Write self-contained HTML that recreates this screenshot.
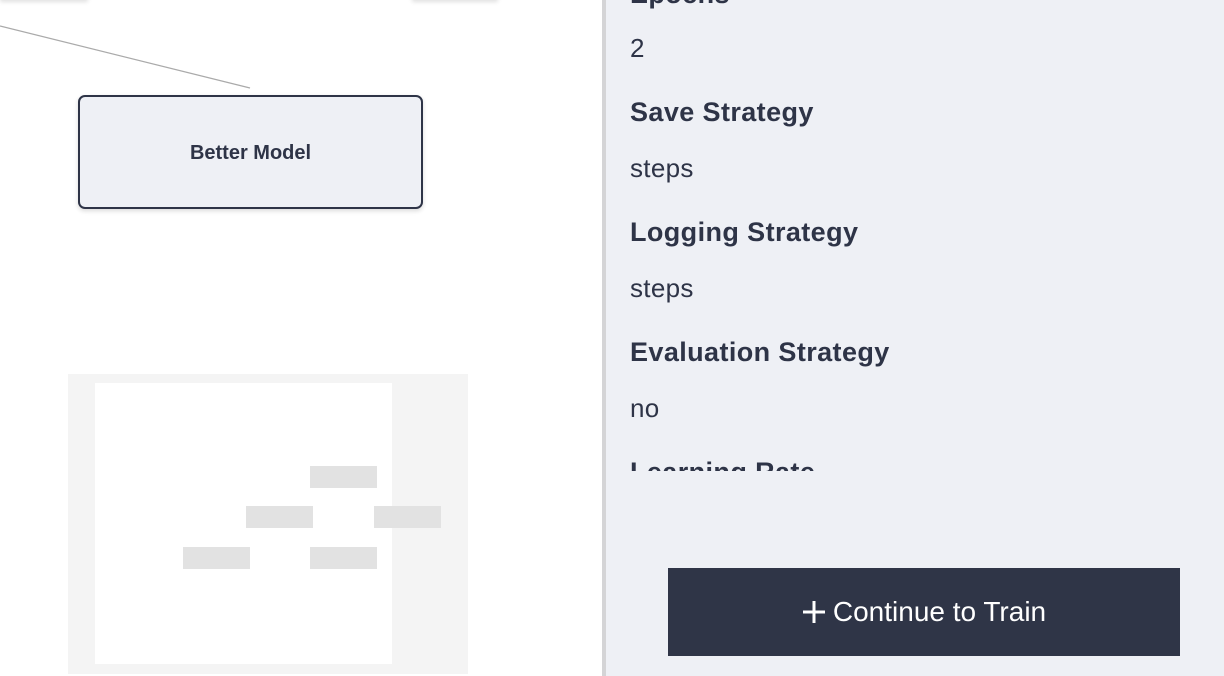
<!DOCTYPE html>
<html><head><style>
body{margin:0;width:1224px;height:676px;overflow:hidden;background:#fff;font-family:"Liberation Sans",sans-serif;position:relative}
.a{position:absolute}
.side{left:602px;top:0;width:622px;height:676px;background:#eef0f5;border-left:4px solid #d4d4d6;box-sizing:border-box}
.clip{position:absolute;left:24px;top:0;width:580px;height:471px;overflow:hidden;color:#2e3447}
.h{position:absolute;font-weight:bold;font-size:27px;letter-spacing:0.4px}
.v{position:absolute;font-size:26px;letter-spacing:0.3px}
.blk{position:absolute;background:#e2e2e2;width:67px;height:22px}
</style></head><body>
<div class="a" style="left:0;top:-20px;width:88px;height:20px;box-shadow:0 2px 4px rgba(0,0,0,.12)"></div>
<div class="a" style="left:412px;top:-20px;width:86px;height:20px;box-shadow:0 2px 4px rgba(0,0,0,.12)"></div>
<svg class="a" style="left:0;top:0" width="300" height="100"><line x1="0" y1="26" x2="250" y2="88" stroke="#aaa" stroke-width="1.3"/></svg>
<div class="a" style="left:78px;top:95px;width:345px;height:114px;box-sizing:border-box;border:2.5px solid #2e3447;border-radius:7px;background:#eef0f5;box-shadow:0 2px 5px rgba(0,0,0,.15);display:flex;align-items:center;justify-content:center;font-weight:bold;font-size:20px;color:#2e3447;padding-top:2px">Better Model</div>
<div class="a" style="left:68px;top:374px;width:400px;height:300px;background:#f4f4f4"></div>
<div class="a" style="left:95px;top:383px;width:297px;height:281px;background:#fff"></div>
<div class="blk" style="left:310px;top:466px"></div>
<div class="blk" style="left:246px;top:506px"></div>
<div class="blk" style="left:374px;top:506px"></div>
<div class="blk" style="left:183px;top:547px"></div>
<div class="blk" style="left:310px;top:547px"></div>
<div class="a side">
<div class="clip">
<div class="h" style="top:-21px">Epochs</div>
<div class="v" style="top:33px">2</div>
<div class="h" style="top:97px">Save Strategy</div>
<div class="v" style="top:153px">steps</div>
<div class="h" style="top:217px">Logging Strategy</div>
<div class="v" style="top:273px">steps</div>
<div class="h" style="top:337px">Evaluation Strategy</div>
<div class="v" style="top:393px">no</div>
<div class="h" style="top:457px">Learning Rate</div>
</div>
<div class="a" style="left:62px;top:568px;width:512px;height:88px;background:#2f3547;color:#fff;font-size:28px;display:flex;align-items:center;justify-content:center"><svg width="24" height="24" style="margin-right:7px"><path d="M12 1V23M1 12H23" stroke="#fff" stroke-width="3"/></svg>Continue to Train</div>
</div>
</body></html>
